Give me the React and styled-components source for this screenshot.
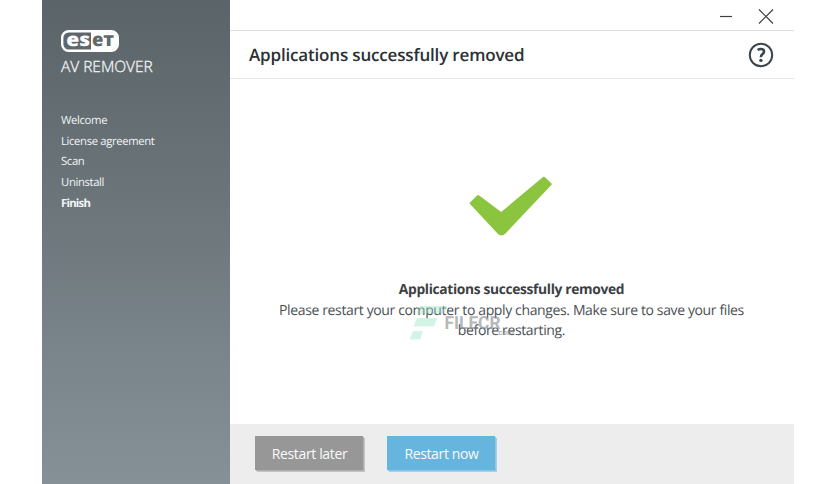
import React from "react";
import styled, { createGlobalStyle } from "styled-components";

const GlobalStyle = createGlobalStyle`
  * { box-sizing: border-box; }
  body {
    margin: 0;
    background: #fff;
    font-family: "Open Sans", "Noto Sans", sans-serif;
    text-rendering: geometricPrecision;
  }
`;

const Window = styled.div`
  display: flex;
  width: 752px;
  height: 484px;
  margin-left: 42px;
  overflow: hidden;
`;

const Sidebar = styled.aside`
  flex: 0 0 188px;
  padding: 30px 0 0 19px;
  color: #f3f5f6;
  background: linear-gradient(#5b6468 0%, #626c71 20%, #6c767b 45%, #7b868c 75%, #869197 100%);
`;

const Logo = styled.svg`
  display: block;
  width: 58px;
  height: 22px;
  overflow: visible;
`;

const Product = styled.div`
  margin-top: 3px;
  font-size: 15.5px;
  font-weight: 300;
  line-height: 22px;
  letter-spacing: -0.03px;
  white-space: nowrap;
  -webkit-text-stroke: 0.3px currentColor;
`;

const Steps = styled.ol`
  list-style: none;
  margin: 34px 0 0;
  padding: 0;
`;

const Step = styled.li`
  height: 20.7px;
  font-size: 11.3px;
  line-height: 20.7px;
  font-weight: ${(p) => (p.$current ? 700 : 400)};
  letter-spacing: ${(p) => (p.$current ? "-0.75px" : "-0.36px")};
`;

const Main = styled.main`
  flex: 1;
  display: flex;
  flex-direction: column;
  min-width: 0;
`;

const TitleBar = styled.div`
  display: flex;
  justify-content: flex-end;
  align-items: flex-start;
  gap: 24px;
  height: 31px;
  padding: 8px 20px 0 0;
  border-bottom: 1px solid #dcdee0;
`;

const WindowIcon = styled.svg`
  width: 16px;
  height: 16px;
  fill: none;
  stroke: #3a4145;
  stroke-width: 1.2;
`;

const Header = styled.header`
  display: flex;
  align-items: center;
  justify-content: space-between;
  height: 48px;
  padding: 0 20px 0 19px;
  border-bottom: 1px solid #e6e7e8;
`;

const Title = styled.h1`
  margin: 0;
  font-size: 17px;
  font-weight: 600;
  letter-spacing: -0.17px;
  color: #2b3033;
  white-space: nowrap;
`;

const HelpIcon = styled.svg`
  width: 26px;
  height: 26px;
`;

const Content = styled.section`
  position: relative;
  flex: 1;
  display: flex;
  flex-direction: column;
  align-items: center;
  padding-top: 97px;
`;

const Check = styled.svg`
  width: 84px;
  height: 61px;
  margin-right: 2px;
`;

const Message = styled.div`
  margin-top: 43px;
  margin-right: 1px;
  color: #4b5054;
  font-size: 14px;
  line-height: 20.6px;
  letter-spacing: -0.37px;
  text-align: center;
`;

const MessageTitle = styled.div`
  font-size: 13.8px;
  font-weight: 700;
  color: #3a4043;
  letter-spacing: -0.34px;
`;

const MessageLine = styled.div`
  white-space: nowrap;
`;

const Watermark = styled.svg`
  position: absolute;
  left: 178px;
  top: 225px;
  width: 112px;
  height: 38px;
`;

const Footer = styled.footer`
  display: flex;
  gap: 24px;
  height: 60px;
  padding: 12px 0 0 25px;
  background: #ededed;
`;

const Button = styled.button`
  width: 108px;
  height: 34px;
  padding: 0 0 0 1px;
  border: 0;
  font: 400 14px "Open Sans", sans-serif;
  letter-spacing: -0.36px;
  color: #fafafa;
  background: ${(p) => (p.$primary ? "#66b5df" : "#979797")};
  box-shadow: 1px 1px 0 ${(p) => (p.$primary ? "#8cc6e3" : "#b0b0b0")}, 2px 2px 0 ${(p) => (p.$primary ? "#a4d1e8" : "#c3c3c3")};
`;

const steps = ["Welcome", "License agreement", "Scan", "Uninstall", "Finish"];

export default function App() {
  return (
    <>
      <GlobalStyle />
      <Window>
        <Sidebar>
          <Logo viewBox="0 0 58 22" aria-label="eset">
            <rect x="1.2" y="1.2" width="55.6" height="19.6" rx="6.5" fill="none" stroke="#fff" strokeWidth="2.4" />
            <path d="M30 2H49.5Q56 2 56 8.6V13.4Q56 20 49.5 20H30Z" fill="#fff" />
            <g fontFamily="Open Sans" fontWeight="800" fontSize="18.5">
              <text x="5.2" y="16.2" textLength="24" lengthAdjust="spacingAndGlyphs" fill="#fff">es</text>
              <text x="31" y="16.2" textLength="11.4" lengthAdjust="spacingAndGlyphs" fill="#5f696d">e</text>
              <text x="42.2" y="16.2" fontSize="15" textLength="10.8" lengthAdjust="spacingAndGlyphs" fill="#5f696d">T</text>
            </g>
          </Logo>
          <Product>AV REMOVER</Product>
          <Steps>
            {steps.map((s) => (
              <Step key={s} $current={s === "Finish"}>{s}</Step>
            ))}
          </Steps>
        </Sidebar>
        <Main>
          <TitleBar>
            <WindowIcon viewBox="0 0 16 16"><path d="M2 8.5H14" /></WindowIcon>
            <WindowIcon viewBox="0 0 16 16"><path d="M1 1.5L15 15.5M15 1.5L1 15.5" /></WindowIcon>
          </TitleBar>
          <Header>
            <Title>Applications successfully removed</Title>
            <HelpIcon viewBox="0 0 26 26">
              <circle cx="13" cy="13" r="11.2" fill="none" stroke="#3b454c" strokeWidth="2" />
              <path d="M9.6 8Q11.2 7 13 7Q16 7 16 9.6Q16 11.1 14.5 12.1Q12.9 13.1 12.9 15.2" fill="none" stroke="#3b454c" strokeWidth="2.6" />
              <circle cx="12.9" cy="18.4" r="1.7" fill="#3b454c" />
            </HelpIcon>
          </Header>
          <Content>
            <Check viewBox="0 0 84 61">
              <path d="M1 26.5L8 19.5Q9 18.5 10.2 19.4L32.2 36L74 1Q75 0.2 76 1.2L82.3 7.2Q83.2 8 82.3 9L36.5 57.5Q32.5 61.4 28.5 57.5L1 28Q0.3 27.2 1 26.5Z" fill="#8bc53f" />
            </Check>
            <Message>
              <MessageTitle>Applications successfully removed</MessageTitle>
              <MessageLine>Please restart your computer to apply changes. Make sure to save your files</MessageLine>
              <MessageLine>before restarting.</MessageLine>
            </Message>
            <Watermark viewBox="0 0 112 38">
              <g fill="#9be3c8" opacity="0.42">
                <path d="M12 2H39L36 9.5H8.5Z" />
                <path d="M9 14H29.5L26 22.5H5.5Z" />
                <path d="M5 27H15L12 35.5H1.5Z" />
              </g>
              <g fill="#85898b" opacity="0.6" fontFamily="Roboto" fontWeight="700">
                <text x="36.5" y="24.5" fontSize="18" textLength="56" lengthAdjust="spacingAndGlyphs">FILECR</text>
                <text x="88" y="31" fontSize="8" textLength="18" lengthAdjust="spacingAndGlyphs">.com</text>
              </g>
            </Watermark>
          </Content>
          <Footer>
            <Button>Restart later</Button>
            <Button $primary>Restart now</Button>
          </Footer>
        </Main>
      </Window>
    </>
  );
}
